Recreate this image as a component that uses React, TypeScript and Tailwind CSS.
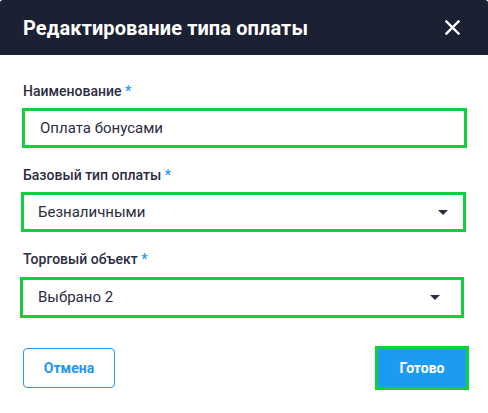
import React from "react";

const Caret = () => (
  <svg width="10" height="5" viewBox="0 0 10 5" className="block">
    <path d="M0 0 L10 0 L5 5 Z" fill="#2b2d42" />
  </svg>
);

export default function App() {
  return (
    <div
      className="w-[488px] h-[413px] bg-white flex flex-col"
      style={{ fontFamily: "Roboto, 'Noto Sans', sans-serif" }}
    >
      <div className="h-[55px] bg-[#1b2133] flex items-center justify-between pl-[23px] pr-[28px] rounded-t-[3px]">
        <span className="text-white text-[20px] font-bold leading-none tracking-[0.1px]">
          Редактирование типа оплаты
        </span>
        <svg width="15" height="15" viewBox="0 0 15 15">
          <path d="M1.5 1.5 L13.5 13.5 M13.5 1.5 L1.5 13.5" stroke="white" strokeWidth="2.4" strokeLinecap="square" />
        </svg>
      </div>

      <div className="flex flex-col pt-[26px]">
        <div className="pl-[23px] text-[14px] leading-[20px] font-medium text-[#2b2d42]">
          Наименование <span className="text-[#2196f3]">*</span>
        </div>
        <div className="mt-[7px] ml-[22px] w-[445px] h-[40px] border-[3px] border-[#11d03f] flex items-center pl-[15px] text-[15px] text-[#2b2d42]">
          Оплата бонусами
        </div>

        <div className="mt-[17px] pl-[23px] text-[14px] leading-[20px] font-medium text-[#2b2d42]">
          Базовый тип оплаты <span className="text-[#2196f3]">*</span>
        </div>
        <div className="mt-[7px] ml-[21px] w-[445px] h-[40px] border-[3px] border-[#11d03f] flex items-center justify-between pl-[14px] pr-[15px] text-[15px] text-[#2b2d42]">
          <span>Безналичными</span>
          <Caret />
        </div>

        <div className="mt-[17px] pl-[23px] text-[14px] leading-[20px] font-medium text-[#2b2d42]">
          Торговый объект <span className="text-[#2196f3]">*</span>
        </div>
        <div className="mt-[8px] ml-[20px] w-[444px] h-[41px] border-[3px] border-[#11d03f] flex items-center justify-between pl-[15px] pr-[21px] text-[15px] text-[#2b2d42]">
          <span>Выбрано 2</span>
          <Caret />
        </div>

        <div className="mt-[28px] flex items-center justify-between pl-[23px] pr-[19px]">
          <button className="w-[92px] h-[40px] border border-[#2196f3] rounded-[4px] text-[#2196f3] text-[14px] font-bold flex items-center justify-center">
            Отмена
          </button>
          <button className="w-[94px] h-[44px] border-[3px] border-[#11d03f] bg-[#1d9bf0] text-white text-[14px] font-bold flex items-center justify-center">
            Готово
          </button>
        </div>
      </div>
    </div>
  );
}
